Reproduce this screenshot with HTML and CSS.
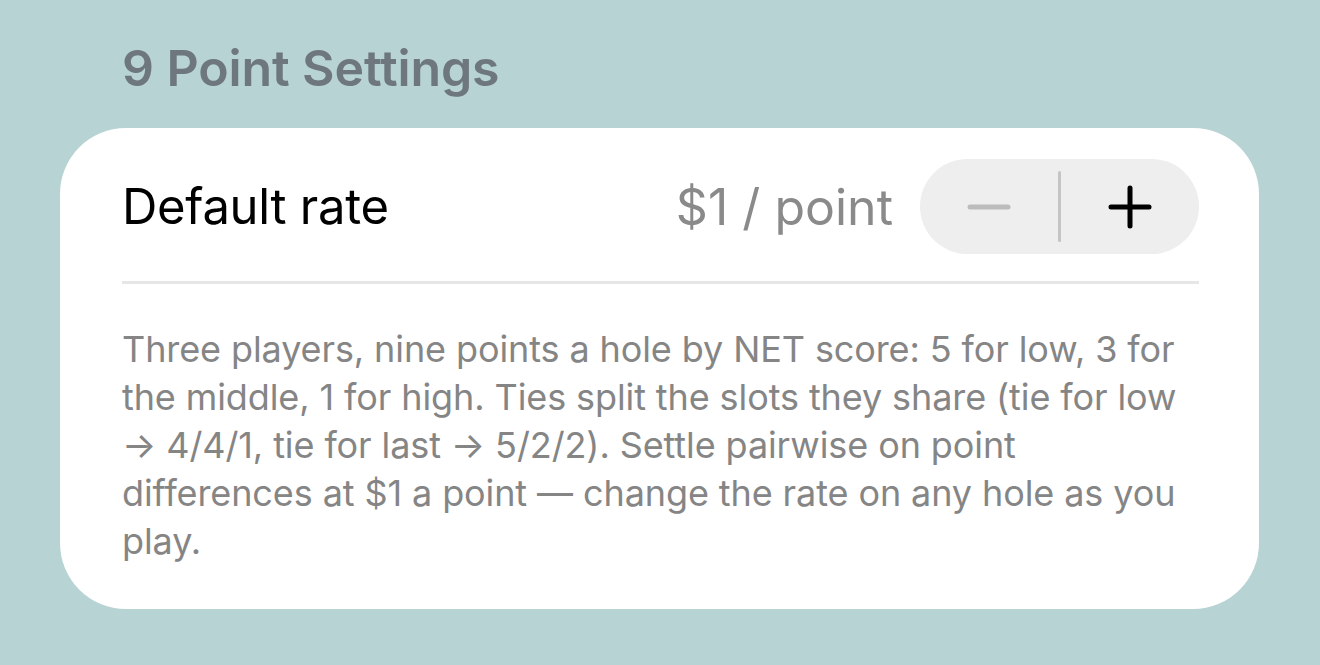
FILE: index.html
```html
<!DOCTYPE html>
<html>
<head>
<meta charset="utf-8">
<link rel="stylesheet" href="styles.css">
</head>
<body>
<main class="page">
  <h2 class="section-title">9 Point Settings</h2>
  <section class="card">
    <div class="row">
      <span class="row-label">Default rate</span>
      <span class="row-value">$1 / point</span>
      <div class="stepper">
        <button class="step minus" aria-label="Decrease">
          <svg width="44" height="44" viewBox="0 0 44 44"><line x1="3" y1="22" x2="41" y2="22" stroke="#bcbcbc" stroke-width="5" stroke-linecap="round"/></svg>
        </button>
        <span class="step-divider"></span>
        <button class="step plus" aria-label="Increase">
          <svg width="44" height="44" viewBox="0 0 44 44"><line x1="3" y1="22" x2="41" y2="22" stroke="#000" stroke-width="5" stroke-linecap="round"/><line x1="22" y1="3" x2="22" y2="41" stroke="#000" stroke-width="5" stroke-linecap="round"/></svg>
        </button>
      </div>
    </div>
    <p class="description">Three players, nine points a hole by NET score: 5 for low, 3 for the middle, 1 for high. Ties split the slots they share (tie for low → 4/4/1, tie for last → 5/2/2). Settle pairwise on point differences at $1 a point — change the rate on any hole as you play.</p>
  </section>
</main>
</body>
</html>
```

FILE: styles.css
```css
* { box-sizing: border-box; }
html, body { margin: 0; padding: 0; }
body {
  background: #b7d3d4;
  font-family: Inter, "Noto Sans", "Liberation Sans", sans-serif;
  width: 1320px;
  height: 665px;
  overflow: hidden;
}
.page {
  padding: 36px 61px 0 60px;
}
.section-title {
  margin: 0 0 0 62px;
  font-size: 50px;
  line-height: 64px;
  font-weight: 600;
  color: #6d777d;
  letter-spacing: -0.1px;
}
.card {
  margin-top: 28px;
  background: #fff;
  border-radius: 66px;
  padding: 31px 60px 44px 62px;
}
.row {
  display: flex;
  align-items: center;
  height: 95px;
}
.row-label {
  font-size: 49px;
  color: #000;
  flex: 1;
  letter-spacing: -0.3px;
}
.row-value {
  font-size: 50px;
  color: #8a8a8a;
  margin-right: 27px;
  letter-spacing: 0;
}
.stepper {
  display: flex;
  align-items: center;
  width: 279px;
  height: 95px;
  background: #eeeeee;
  border-radius: 48px;
}
.step {
  flex: 1;
  height: 100%;
  border: 0;
  background: transparent;
  padding: 0;
  display: flex;
  align-items: center;
  justify-content: center;
}
.step-divider {
  width: 3px;
  height: 71px;
  background: #c4c4c4;
  border-radius: 2px;
}
.description {
  margin: 0;
  padding-top: 41px;
  border-top: 3px solid #e6e6e6;
  margin-top: 27px;
  font-size: 36px;
  line-height: 48px;
  color: #858585;
  letter-spacing: -0.1px;
}
```
